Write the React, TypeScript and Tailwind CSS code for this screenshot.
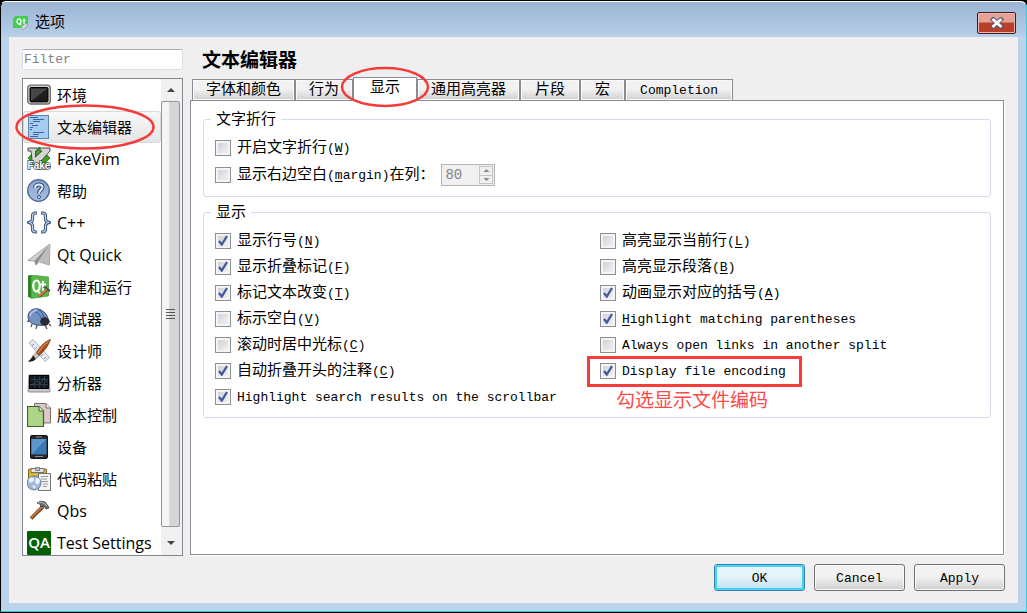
import React, { useState } from "react";

const CJK = "font-['Liberation_Sans','Noto_Sans_CJK_SC',sans-serif]";
const MONO = "font-['Liberation_Mono','Noto_Sans_CJK_SC',monospace]";

function Svg({ children }: { children: React.ReactNode }) {
  return (
    <svg viewBox="0 0 24 24" className="size-6 shrink-0" aria-hidden="true">
      {children}
    </svg>
  );
}

const icons: Record<string, React.ReactNode> = {
  env: (
    <Svg>
      <rect x="0.7" y="2.2" width="22.6" height="18.8" rx="3" fill="#d6d6d0" stroke="#6b6b68" strokeWidth="1.3" />
      <rect x="3" y="4.5" width="18" height="14.4" rx="1" fill="#1d1d1d" stroke="#000" />
      <path d="M4 18V5.500H20.500Z" fill="#474747" />
    </Svg>
  ),
  text: (
    <Svg>
      <rect x="1.500" y="0.500" width="20" height="23" fill="#a9cbee" stroke="#5b84ad" />
      <path d="M3 2.500h8M6 4.500h11M6 6.500h7M3 8.500h3M5 10.500h6M3 12.500h3M3 14.500h2M6 17.500h11M6 19.500h6M3 21.500h8" stroke="#3866a6" strokeWidth="1.200" />
    </Svg>
  ),
  vim: (
    <Svg>
      <path d="M12 0l11 11-11 12L1 11Z" fill="#39a327" stroke="#23701a" strokeWidth="0.800" />
      <path d="M1 1h9v3H8.500v6L15 4h-2V1h10v3L10.500 18H5.500L4 4H1Z" fill="#d4d6d3" stroke="#494949" strokeWidth="1" />
      <text x="12" y="21.500" textAnchor="middle" fontSize="10" fontWeight="bold" fontFamily="Liberation Sans, sans-serif" fill="#fff" stroke="#4a4a4a" strokeWidth="1.600" paintOrder="stroke">Fake</text>
    </Svg>
  ),
  help: (
    <Svg>
      <defs>
        <linearGradient id="helpFill" x1="0" y1="0" x2="0" y2="1">
          <stop offset="0" stopColor="#8ba7cf" />
          <stop offset="1" stopColor="#a8bce0" />
        </linearGradient>
      </defs>
      <circle cx="11.500" cy="11.500" r="10.800" fill="url(#helpFill)" stroke="#4a6590" strokeWidth="1.300" />
      <path d="M8 9c0-5 8-4.500 7.500-.5-.3 2.500-3.500 2.500-3.500 6" fill="none" stroke="#304d7d" strokeWidth="4" />
      <path d="M8 9c0-5 8-4.500 7.500-.5-.3 2.500-3.500 2.500-3.500 6" fill="none" stroke="#e8edf6" strokeWidth="2" />
      <circle cx="12" cy="18" r="1.500" fill="#f4f7fc" stroke="#304d7d" />
    </Svg>
  ),
  cpp: (
    <Svg>
      <g fill="none" strokeLinejoin="round">
        <path d="M10 2H8.500q-3 0-3 3v3q0 3-4 3.500 4 .5 4 3.500v3q0 3 3 3H10M14 2h1.500q3 0 3 3v3q0 3 4 3.500-4 .5-4 3.500v3q0 3-3 3H14" stroke="#3d567c" strokeWidth="3.200" />
        <path d="M9.500 2h-1q-3 0-3 3v3q0 3-3.500 3.500 3.500.5 3.500 3.500v3q0 3 3 3h1M14.500 2h1q3 0 3 3v3q0 3 3.500 3.500-3.500.5-3.500 3.500v3q0 3-3 3h-1" stroke="#c3d2e8" strokeWidth="1.200" />
      </g>
    </Svg>
  ),
  quick: (
    <Svg>
      <path d="M23 1L.8 17.500l6.700.5 1.500 4 3.500-3 9.800 3Z" fill="#d2d2d2" stroke="#8f8f8f" strokeWidth="0.800" />
      <path d="M23 1L7.500 18 9 22Z" fill="#8c8c8c" />
      <path d="M23 1L11.500 18.500 22 21.500Z" fill="#bcbcbc" />
    </Svg>
  ),
  build: (
    <Svg>
      <path d="M1 .5L4 0v23l-3-1Z" fill="#2d8424" />
      <path d="M4 0l17.500 2v19L4 23.500Z" fill="#5bb74b" stroke="#348b2a" strokeWidth="0.600" />
      <ellipse cx="9.500" cy="11" rx="3.200" ry="5.500" fill="none" stroke="#fff" strokeWidth="2.200" />
      <path d="M10 15l3.500 4M16 6v9q0 1.500 2 1M13.500 9.500h5.500" stroke="#fff" strokeWidth="1.800" fill="none" />
      <path d="M12 21.500l8-7" stroke="#8b451c" strokeWidth="2.600" />
      <path d="M12 21l8-7" stroke="#e18d50" strokeWidth="1.200" />
      <path d="M15.500 12.500l3-1.500 5 4-1.500 2.500-2.500-3.500Z" fill="#555" />
    </Svg>
  ),
  debug: (
    <Svg>
      <path d="M2 13l-1.500 2M5 17l-1 3M10 18l-1 4M20 13l3 2M18 18l2 4M22 17l2 2" stroke="#555" strokeWidth="1.300" />
      <path d="M1 10C1 1 12-1 18 6c3.500 4 4 8 1 11-5 3-18 1-18-7Z" fill="#7292c4" stroke="#344c72" strokeWidth="1" />
      <path d="M4 4C12 4 15 10 15 17M12 3q5 3 5 8" stroke="#3f5f90" strokeWidth="1" fill="none" />
      <path d="M3 9q1-5 7-6" stroke="#a9bfe3" strokeWidth="1.800" fill="none" />
      <ellipse cx="17.800" cy="14.500" rx="4.600" ry="4.200" fill="#252a34" />
    </Svg>
  ),
  design: (
    <Svg>
      <path d="M2 4l4-3.500 16.500 18-4.500 4Z" fill="#e6ebf3" stroke="#9fabbc" strokeWidth="0.900" />
      <path d="M7 5L5 7M10 8L8 10M16 15l-2 2M19 18l-2 2" stroke="#8391a7" />
      <path d="M23.500.5Q16 3 9.500 13.500l2.500 3Q20 10 23.500.5Z" fill="#a94e16" stroke="#5e2a0a" strokeWidth="0.800" />
      <path d="M22 2Q16 6 11 14" stroke="#e68a42" strokeWidth="1.200" fill="none" />
      <path d="M9 13.500l3 3.500-3 2.500-3-3Z" fill="#cfc8b5" stroke="#666" strokeWidth="0.600" />
      <path d="M6 16.500l3 3.500Q6 23.500 1 22.500q3-2 5-6Z" fill="#222" />
    </Svg>
  ),
  analyze: (
    <Svg>
      <path d="M2 4h20l1 16q0 1-1 1H2q-1 0-1-1Z" fill="#c8c8c8" stroke="#777" strokeWidth="0.800" />
      <rect x="2.500" y="4.500" width="19" height="13" fill="#141920" stroke="#000" />
      <path d="M7.500 5v12M12.500 5v12M17.500 5v12M3 8.500h18M3 13.500h18" stroke="#343e4c" strokeWidth="0.800" />
      <path d="M3 14l4-1 3-3 3 3 4-6 4 5" fill="none" stroke="#3d5873" strokeWidth="0.700" />
    </Svg>
  ),
  vcs: (
    <Svg>
      <path d="M7.500.5H19l4.500 4.500v15H7.500Z" fill="#dfc7c9" stroke="#7d6e70" />
      <path d="M19 .5V5h4.500" fill="#f2e4e5" stroke="#7d6e70" />
      <path d="M.5 3.500H12L16.500 8v15.500H.5Z" fill="#aed487" stroke="#3e5f34" strokeWidth="1.200" />
      <path d="M12 3.500V8h4.500" fill="#d9edc4" stroke="#3e5f34" />
    </Svg>
  ),
  device: (
    <Svg>
      <rect x="3.500" y="0.500" width="17" height="23" rx="1.500" fill="#25292f" stroke="#111" />
      <rect x="4.500" y="4" width="15" height="15.500" fill="#3b78b4" />
      <path d="M4.500 19.500V4h15Z" fill="#5c97cb" />
      <path d="M9 2h6M8 21.500h8" stroke="#8b8f95" strokeWidth="1" />
    </Svg>
  ),
  paste: (
    <Svg>
      <rect x="1.500" y="2" width="18" height="17" rx="1" fill="#e1b72c" stroke="#7c6420" />
      <path d="M4 1.500h13v4H4Z" fill="#e3e3df" stroke="#72726d" />
      <path d="M8.500.5h4v3h-4Z" fill="#bbb" stroke="#666" strokeWidth="0.700" />
      <rect x="11.500" y="6.500" width="12" height="17" fill="#f5f5f3" stroke="#777" />
      <path d="M14 9.500h7M14 12h6M14 14.500h7M16 17h5M16 19.500h4" stroke="#999" strokeWidth="1.100" />
      <circle cx="7" cy="16" r="7" fill="#9db6da" stroke="#5d779f" strokeWidth="0.900" />
      <path d="M1.500 12q3-3 5-1t-1 4l-3 1ZM9 11q4-1 4 4l-3 3-2-3ZM5 18l4 1-2 3Z" fill="#e9f0fa" />
    </Svg>
  ),
  qbs: (
    <Svg>
      <path d="M4 19.500L16 7.500" stroke="#6c371c" strokeWidth="3.600" />
      <path d="M4 19L16 7" stroke="#c87545" strokeWidth="1.800" />
      <path d="M10 4q3-3 8-1l3 4 1 2-3 1-2-3-3 1-1-3Z" fill="#6a7175" stroke="#34383a" strokeWidth="0.800" />
      <path d="M11 4q4-2 7 1l2 2" stroke="#b8c0c2" fill="none" />
    </Svg>
  ),
  qa: (
    <Svg>
      <rect width="24" height="24" rx="1" fill="#045f04" />
      <text x="12" y="17" textAnchor="middle" fontSize="15" fontWeight="600" fontFamily="Open Sans, Noto Sans, sans-serif" fill="#fff">QA</text>
    </Svg>
  ),
};

const categories = [
  { id: "env", name: "环境" },
  { id: "text", name: "文本编辑器" },
  { id: "vim", name: "FakeVim", latin: true },
  { id: "help", name: "帮助" },
  { id: "cpp", name: "C++", latin: true },
  { id: "quick", name: "Qt Quick", latin: true },
  { id: "build", name: "构建和运行" },
  { id: "debug", name: "调试器" },
  { id: "design", name: "设计师" },
  { id: "analyze", name: "分析器" },
  { id: "vcs", name: "版本控制" },
  { id: "device", name: "设备" },
  { id: "paste", name: "代码粘贴" },
  { id: "qbs", name: "Qbs", latin: true },
  { id: "qa", name: "Test Settings", latin: true },
];

const tabs = [
  { label: "字体和颜色", pad: "px-[13px]" },
  { label: "行为", pad: "px-[13px]" },
  { label: "显示", pad: "px-4" },
  { label: "通用高亮器", pad: "px-[13px]" },
  { label: "片段", pad: "px-3.5" },
  { label: "宏", pad: "px-3.5" },
  { label: "Completion", pad: "px-3.5" },
];

function Arrow({ up = false, small = false }: { up?: boolean; small?: boolean }) {
  return (
    <svg viewBox="0 0 10 5" className={small ? "h-[3px] w-[7px]" : "h-1 w-2"} aria-hidden="true">
      <path d={up ? "M0 5L5 0l5 5Z" : "M0 0l5 5 5-5Z"} fill={small ? "#8c8c8c" : "#444"} />
    </svg>
  );
}

type OptionProps = {
  text?: string;
  open?: string;
  shortcut?: string;
  close?: string;
  tail?: string;
  checked?: boolean;
};

function Option({ text, open, shortcut, close, tail, checked = false }: OptionProps) {
  return (
    <label className="flex h-[26px] items-center gap-1.5 whitespace-nowrap">
      <span className="grid size-4 shrink-0">
        <input
          type="checkbox"
          defaultChecked={checked}
          className="peer col-start-1 row-start-1 size-4 appearance-none border border-[#8e8f8f] bg-linear-to-br from-[#c9ced6] to-[#f6f6f6] shadow-[inset_0_0_0_2px_#f4f4f4]"
        />
        <svg viewBox="0 0 16 16" className="pointer-events-none invisible col-start-1 row-start-1 size-4 peer-checked:visible" aria-hidden="true">
          <path d="M4 8l2.800 3.500L12 3" fill="none" stroke="#42599a" strokeWidth="2.300" />
        </svg>
      </span>
      <span className="pt-0.5 leading-5">
        {text}
        <span className="text-[13px]">
          {open}
          {shortcut && <u className="underline-offset-2">{shortcut}</u>}
          {close}
        </span>
        {tail}
      </span>
    </label>
  );
}

export default function App() {
  const [category, setCategory] = useState("text");
  const [tab, setTab] = useState("显示");

  return (
    <div className={`flex h-screen flex-col border-y border-black bg-black text-[15px] text-black ${CJK}`}>
      <div className="flex min-h-0 flex-1 flex-col rounded-t-md border-x border-t border-b border-t-white border-r-[#35c9e6] border-b-[#35c9e6] border-l-black bg-[#bcd3ea] px-2 pb-2">
        <header className="-mx-2 flex h-[35px] shrink-0 items-center justify-between rounded-t-md bg-linear-to-b from-[#9ab4d2] to-[#b7cfe9] pr-2.5 pl-3">
          <div className="flex items-center gap-1.5 pt-1.5">
            <svg viewBox="0 0 16 16" className="size-4" aria-hidden="true">
              <path d="M2.500 1H15v10l-2.500 2H0V3.500Z" fill="#41cd52" />
              <ellipse cx="6" cy="6.500" rx="2" ry="2.600" fill="none" stroke="#fff" strokeWidth="1.200" />
              <path d="M6.500 8l1.500 2.300M11 3.500v4.700q0 1.200 1.500.8M9.500 5.500h3" fill="none" stroke="#fff" strokeWidth="1.200" />
              <path d="M8 12l5-4 2 2.500-5 4.500Z" fill="#d6d6d2" stroke="#999" strokeWidth="0.700" />
            </svg>
            <h1>选项</h1>
          </div>
          <button
            type="button"
            aria-label="关闭"
            className="mt-1.5 flex h-[22px] w-[39px] items-center justify-center rounded-[2px] border border-[#431a20] bg-linear-to-b from-[#e5a294] from-45% to-[#b93f2a] to-50% shadow-[inset_0_0_0_1px_#e9b9ae]"
          >
            <svg viewBox="0 0 14 12" className="h-3 w-3.5" aria-hidden="true">
              <path d="M1.500 1l11 10M12.500 1l-11 10" stroke="#555a69" strokeWidth="4.600" />
              <path d="M2.500 2l9 8M11.500 2l-9 8" stroke="#fff" strokeWidth="2.800" />
            </svg>
          </button>
        </header>

        <main className="flex min-h-0 flex-1 flex-col gap-2 bg-[#efefef] pt-3 pr-3.5 pb-3 pl-[13px]">
          <div className="flex min-h-0 flex-1 gap-[7px]">
            <aside className="flex w-[161px] shrink-0 flex-col gap-2">
              <input
                aria-label="Filter"
                placeholder="Filter"
                className={`h-[21px] w-full shrink-0 rounded-[2px] border border-[#d8dfea] border-t-[#abadb3] bg-white px-px text-[13px] outline-none placeholder:text-[#808080] ${MONO}`}
              />
              <div className="flex min-h-0 flex-1 border border-[#828790] bg-white">
                <ul className="flex min-w-0 flex-1 flex-col overflow-visible [clip-path:inset(0_-20px_0_-20px)] font-['Open_Sans','Noto_Sans_CJK_SC',sans-serif]">
                  {categories.map(({ id, name, latin }) => (
                    <li key={id} className="relative h-8 shrink-0">
                      <button
                        type="button"
                        onClick={() => setCategory(id)}
                        className={`flex h-8 w-full items-center gap-1.5 rounded-[3px] border px-[3px] text-left whitespace-nowrap ${
                          category === id ? "border-[#d9d9d9] bg-linear-to-b from-[#f8f8f8] to-[#e5e5e5]" : "border-transparent"
                        }`}
                      >
                        {icons[id]}
                        <span className={latin ? "text-base" : ""}>{name}</span>
                      </button>
                      {id === "text" && (
                        <svg viewBox="0 0 140 46" className="pointer-events-none absolute -top-[7px] -left-2 z-10 h-[46px] w-[140px]" aria-hidden="true">
                          <ellipse cx="70" cy="23" rx="68.500" ry="21.500" fill="none" stroke="#f53a3a" strokeWidth="2.500" />
                        </svg>
                      )}
                    </li>
                  ))}
                </ul>
                <div className="flex w-[21px] shrink-0 flex-col bg-[#f0f0f0] pr-0.5" aria-hidden="true">
                  <div className="flex h-[22px] items-center justify-center">
                    <Arrow up />
                  </div>
                  <div className="flex flex-1 flex-col items-center justify-center gap-0.5 rounded-[2px] border border-[#979797] bg-linear-to-r from-[#f5f5f5] from-40% to-[#d3d5d9] to-45%">
                    <i className="h-px w-[9px] bg-[#555]" />
                    <i className="h-px w-[9px] bg-[#555]" />
                    <i className="h-px w-[9px] bg-[#555]" />
                    <i className="h-px w-[9px] bg-[#555]" />
                  </div>
                  <div className="flex h-7 items-center justify-center pt-1">
                    <Arrow />
                  </div>
                </div>
              </div>
            </aside>

            <section className={`flex min-w-0 flex-1 flex-col ${MONO}`}>
              <h2 className="pt-px pb-[3px] pl-3 text-[19px] leading-6 font-bold">文本编辑器</h2>
              <div role="tablist" className="relative z-10 flex h-[23px] items-end pl-0.5">
                {tabs.map(({ label, pad }) => {
                  const active = tab === label;
                  return (
                    <button
                      key={label}
                      type="button"
                      role="tab"
                      aria-selected={active}
                      onClick={() => setTab(label)}
                      className={`relative flex items-center justify-center border border-[#898c95] whitespace-nowrap ${pad} ${
                        active
                          ? "-mb-px h-6 border-b-white bg-white"
                          : "h-[21px] border-b-0 bg-linear-to-b from-[#f2f2f2] from-45% to-[#cfcfcf] pt-0.5 shadow-[inset_0_0_0_1px_#fafafa]"
                      }`}
                    >
                      <span className={label === "Completion" ? "text-[13px]" : "leading-5"}>{label}</span>
                      {label === "显示" && (
                        <svg viewBox="0 0 90 42" className="pointer-events-none absolute -top-3 -left-[14px] z-10 h-[42px] w-[90px]" aria-hidden="true">
                          <ellipse cx="45" cy="21" rx="43" ry="19" fill="none" stroke="#f53a3a" strokeWidth="2.500" />
                        </svg>
                      )}
                    </button>
                  );
                })}
              </div>

              <div role="tabpanel" className="mb-px flex min-h-0 flex-1 flex-col gap-[3px] border border-[#898c95] bg-white px-3 pt-1.5 shadow-[1px_1px_0_#fff]">
                <fieldset className="rounded-[3px] border border-[#d5dbe8] px-[11px] pb-2">
                  <legend className="-ml-1 px-[5px] pt-1 leading-5">文字折行</legend>
                  <div className="flex flex-col gap-px pt-1">
                    <Option text="开启文字折行" open="(" shortcut="W" close=")" />
                    <div className="flex items-center gap-[7px]">
                      <Option text="显示右边空白" open="(" shortcut="m" close="argin)" tail="在列：" />
                      <div className="flex h-[22px] w-[54px] border border-[#b5b5b5] bg-[#f0f0f0] p-px">
                        <input aria-label="margin" disabled defaultValue="80" className="w-0 flex-1 pl-0.5 text-[14px] text-[#838383]" />
                        <span className="flex w-3.5 flex-col" aria-hidden="true">
                          <span className="flex flex-1 items-center justify-center border border-[#c4c4c4]"><Arrow up small /></span>
                          <span className="flex flex-1 items-center justify-center border border-t-0 border-[#c4c4c4]"><Arrow small /></span>
                        </span>
                      </div>
                    </div>
                  </div>
                </fieldset>

                <fieldset className="rounded-[3px] border border-[#d5dbe8] px-[11px] pb-[7px]">
                  <legend className="-ml-1 px-[5px] pt-1 leading-5">显示</legend>
                  <div className="grid grid-cols-2 gap-x-1.5 pt-1">
                    <div>
                      <Option text="显示行号" open="(" shortcut="N" close=")" checked />
                      <Option text="显示折叠标记" open="(" shortcut="F" close=")" checked />
                      <Option text="标记文本改变" open="(" shortcut="T" close=")" checked />
                      <Option text="标示空白" open="(" shortcut="V" close=")" />
                      <Option text="滚动时居中光标" open="(" shortcut="C" close=")" />
                      <Option text="自动折叠开头的注释" open="(" shortcut="C" close=")" checked />
                      <Option open="Highlight search results on the scrollbar" checked />
                    </div>
                    <div>
                      <Option text="高亮显示当前行" open="(" shortcut="L" close=")" />
                      <Option text="高亮显示段落" open="(" shortcut="B" close=")" />
                      <Option text="动画显示对应的括号" open="(" shortcut="A" close=")" checked />
                      <Option shortcut="H" close="ighlight matching parentheses" checked />
                      <Option open="Always open links in another split" />
                      <div className="relative">
                        <Option open="Display file encoding" checked />
                        <div className="pointer-events-none absolute -top-0.5 -left-[13px] h-[31px] w-[215px] border-3 border-[#fb3a3a]" />
                        <p className="absolute top-8 left-4 text-[19px] leading-6 whitespace-nowrap text-[#fb4a4a]">勾选显示文件编码</p>
                      </div>
                    </div>
                  </div>
                </fieldset>
              </div>
            </section>
          </div>

          <footer className={`-mr-px flex shrink-0 justify-end gap-[9px] text-[13px] ${MONO}`}>
            <button type="button" className="h-[27px] w-[91px] rounded-[3px] border border-[#3c7fb1] bg-linear-to-b from-[#e6f4fb] from-45% to-[#bfe0f3] pt-0.5 shadow-[inset_0_0_0_2px_#46d3f8]">OK</button>
            <button type="button" className="h-[27px] w-[91px] rounded-[3px] border border-[#707070] bg-linear-to-b from-[#f2f2f2] from-45% to-[#cfcfcf] pt-0.5 shadow-[inset_0_0_0_1px_#fafafa]">Cancel</button>
            <button type="button" className="h-[27px] w-[91px] rounded-[3px] border border-[#707070] bg-linear-to-b from-[#f2f2f2] from-45% to-[#cfcfcf] pt-0.5 shadow-[inset_0_0_0_1px_#fafafa]">Apply</button>
          </footer>
        </main>
      </div>
    </div>
  );
}
